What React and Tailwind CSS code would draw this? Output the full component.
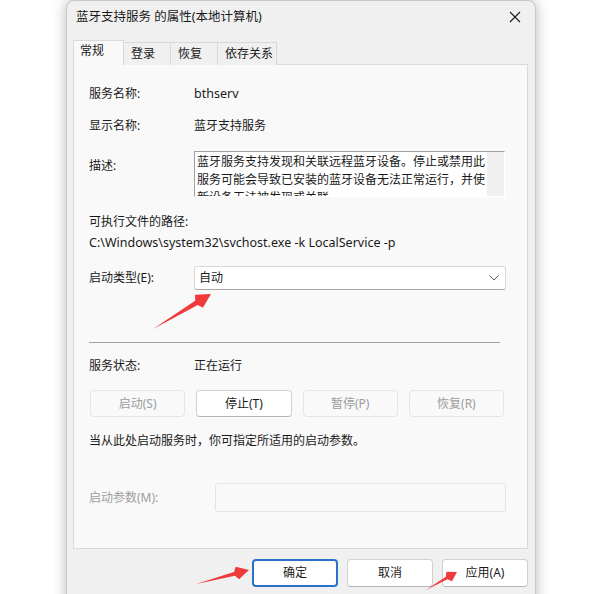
import React from "react";

const font = { fontFamily: '"Noto Sans", "Noto Sans CJK SC", sans-serif' };

// tapering red arrow as drawn over screenshots
function arrowPoints(x1, y1, x2, y2, head = 16, headW = 14, shaft = 5) {
  const dx = x2 - x1;
  const dy = y2 - y1;
  const len = Math.hypot(dx, dy);
  const ux = dx / len;
  const uy = dy / len;
  const px = -uy;
  const py = ux;
  const bx = x2 - ux * head;
  const by = y2 - uy * head;
  const pts = [
    [x1, y1],
    [bx + (px * shaft) / 2, by + (py * shaft) / 2],
    [bx + (px * headW) / 2 + ux * 3, by + (py * headW) / 2 + uy * 3],
    [x2, y2],
    [bx - (px * headW) / 2 + ux * 3, by - (py * headW) / 2 + uy * 3],
    [bx - (px * shaft) / 2, by - (py * shaft) / 2],
  ];
  return pts.map((p) => p.join(",")).join(" ");
}

function Arrows() {
  return (
    <svg className="absolute inset-0 pointer-events-none" width="600" height="594">
      <polygon points={arrowPoints(153, 329, 211, 294, 17, 15, 5)} fill="#f0393a" />
      <polygon points={arrowPoints(196, 584, 249, 570, 15, 13, 4)} fill="#f0393a" />
      <polygon points={arrowPoints(426, 590, 457, 572, 12, 11, 3)} fill="#f0393a" />
    </svg>
  );
}

function Row({ label, children, className = "", labelClass = "" }) {
  return (
    <div className={"flex items-center h-[20px] " + className}>
      <div className={"w-[105px] shrink-0 " + labelClass}>{label}</div>
      <div>{children}</div>
    </div>
  );
}

function ActionButton({ children, disabled }) {
  return (
    <div
      className={
        "h-[27px] flex items-center justify-center rounded-[4px] border " +
        (disabled
          ? "border-[#e5e5e5] bg-[#f9f9f9] text-[#9d9d9d]"
          : "border-[#d0d0d0] border-b-[#b5b5b5] bg-white text-[#1a1a1a]")
      }
    >
      {children}
    </div>
  );
}

function DialogButton({ children, primary }) {
  return (
    <div
      className={
        "w-[86px] h-[28px] flex items-center justify-center rounded-[4px] bg-white text-[#1a1a1a] " +
        (primary ? "border-2 border-[#2c70c9]" : "border border-[#d0d0d0] border-b-[#b5b5b5]")
      }
    >
      {children}
    </div>
  );
}

export default function App() {
  const tabs = ["登录", "恢复", "依存关系"];
  return (
    <div className="relative w-[600px] h-[594px] overflow-hidden bg-white text-[12px] text-[#1a1a1a]" style={font}>
      <div className="ml-[66px] w-[470px] h-[620px] rounded-t-[8px] border border-[#c8c8c8] bg-[#f0f0f0] shadow-[0_0_14px_rgba(0,0,0,0.28)]">
        {/* title bar */}
        <div className="h-[32px] flex items-center justify-between pl-[9px] pr-[10px]">
          <span className="text-[12.5px]">蓝牙支持服务 的属性(本地计算机)</span>
          <svg width="12" height="12" viewBox="0 0 12 12" className="mr-[4px]">
            <path d="M1 1 L11 11 M11 1 L1 11" stroke="#1a1a1a" strokeWidth="1.1" />
          </svg>
        </div>

        {/* tabs */}
        <div className="mt-[7px] ml-[6px] flex items-end h-[25px]">
          <div className="w-[51px] h-[25px] pl-[6px] pt-[1px] bg-[#f9f9f9] border border-[#d9d9d9] border-b-0 relative z-10">
            常规
          </div>
          {tabs.map((t) => (
            <div
              key={t}
              className={
                "h-[23px] pl-[7px] pt-[2px] bg-[#f0f0f0] border border-[#d9d9d9] border-l-0 border-b-0 " +
                (t === "依存关系" ? "w-[59px]" : "w-[47px]")
              }
            >
              {t}
            </div>
          ))}
        </div>

        {/* tab panel */}
        <div className="ml-[6px] w-[455px] h-[485px] -mt-px bg-[#f9f9f9] border border-[#d9d9d9] px-[15px] pt-[19px]">
          <Row label="服务名称:">
            <span className="text-[12.5px]">bthserv</span>
          </Row>
          <Row label="显示名称:" className="mt-[12px]">
            蓝牙支持服务
          </Row>

          <div className="flex mt-[15px]">
            <div className="w-[105px] shrink-0 mt-[5px] leading-[20px]">描述:</div>
            <div className="w-[311px] h-[46px] flex border border-t-[#a0a0a0] border-l-[#a0a0a0] border-r-white border-b-white bg-white overflow-hidden">
              <div className="flex-1 pl-[2px] pt-[1px] leading-[18px] text-[12px]">
                蓝牙服务支持发现和关联远程蓝牙设备。停止或禁用此服务可能会导致已安装的蓝牙设备无法正常运行，并使新设备无法被发现或关联。
              </div>
              <div className="w-[17px] bg-[#f0f0f0]" />
            </div>
          </div>

          <div className="mt-[15px] h-[20px] leading-[20px]">可执行文件的路径:</div>
          <div className="mt-[1px] h-[20px] leading-[20px] text-[12.5px]">C:\Windows\system32\svchost.exe -k LocalService -p</div>

          <div className="flex items-center mt-[13px]">
            <div className="w-[105px] shrink-0">启动类型(E):</div>
            <div className="w-[312px] h-[24px] flex items-center justify-between pl-[4px] pr-[6px] bg-white border border-[#d8d8d8] border-b-[#a8a8a8] rounded-[3px]">
              <span>自动</span>
              <svg width="10" height="6" viewBox="0 0 10 6">
                <path d="M0.5 0.5 L5 5 L9.5 0.5" fill="none" stroke="#555" strokeWidth="1" />
              </svg>
            </div>
          </div>

          <div className="mt-[52px] w-[411px] h-px bg-[#a0a0a0]" />

          <Row label="服务状态:" className="mt-[13px]">
            正在运行
          </Row>

          <div className="mt-[14px] ml-px w-[414px] grid grid-cols-4 gap-[11px]">
            <ActionButton disabled>启动(S)</ActionButton>
            <ActionButton>停止(T)</ActionButton>
            <ActionButton disabled>暂停(P)</ActionButton>
            <ActionButton disabled>恢复(R)</ActionButton>
          </div>

          <div className="mt-[14px] h-[20px] leading-[20px]">当从此处启动服务时，你可指定所适用的启动参数。</div>

          <div className="flex items-center mt-[32px]">
            <div className="w-[126px] shrink-0 text-[#9d9d9d]">启动参数(M):</div>
            <div className="w-[291px] h-[29px] bg-[#f9f9f9] border border-[#e3e3e3] rounded-[3px]" />
          </div>
        </div>

        {/* dialog buttons */}
        <div className="mt-[10px] mr-[7px] flex justify-end gap-[9px]">
          <DialogButton primary>确定</DialogButton>
          <DialogButton>取消</DialogButton>
          <DialogButton>应用(A)</DialogButton>
        </div>
      </div>
      <Arrows />
    </div>
  );
}
